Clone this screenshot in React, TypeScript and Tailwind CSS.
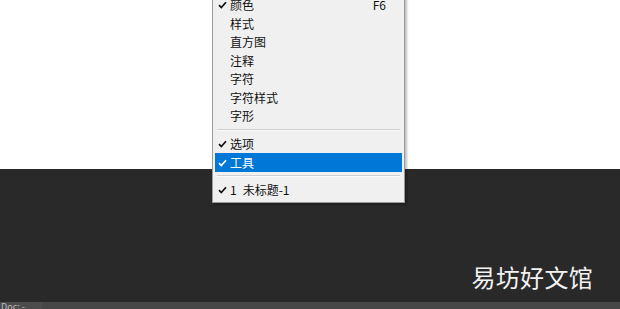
const items = ["颜色", "样式", "直方图", "注释", "字符", "字符样式", "字形"];

function Check({ white }: { white?: boolean }) {
  return (
    <svg width="9" height="8" viewBox="0 0 9 8" className="absolute left-[3px] top-1/2 -translate-y-1/2">
      <path d="M1 4.2 L3.3 6.6 L8 1.2" fill="none" stroke={white ? "#ffffff" : "#111111"} strokeWidth="1.7" />
    </svg>
  );
}

function Item({ label, checked, active, shortcut }: { label: React.ReactNode; checked?: boolean; active?: boolean; shortcut?: string }) {
  return (
    <div
      className={`relative flex h-[18.5px] items-center pl-[15px] pr-[16px] ${active ? "bg-[#0078d7] text-white" : "text-[#111111]"}`}
    >
      {checked && <Check white={active} />}
      <span className="flex-1 leading-none">{label}</span>
      {shortcut && <span className="leading-none">{shortcut}</span>}
    </div>
  );
}

function Separator() {
  return (
    <div className="flex h-[9.25px] items-center px-[2px]">
      <div className="h-[2px] w-full border-t border-[#d0d0d0] border-b border-b-[#fbfbfb]" />
    </div>
  );
}

export default function App() {
  return (
    <div
      className="relative flex h-[309px] w-[620px] flex-col overflow-hidden"
      style={{ fontFamily: '"Noto Sans CJK SC", "Noto Sans", sans-serif' }}
    >
      <div className="h-[169px] bg-white" />
      <div className="flex flex-1 items-end justify-end bg-[#292929] pb-[13px] pr-[27px]">
        <span className="text-[24px] leading-none tracking-[0.3px] text-[#f2f2f2]">易坊好文馆</span>
      </div>
      <div className="flex h-[7px] bg-[#474747]">
        <div className="w-[42px] bg-[#4c4c4c] pl-[1px] text-[9px] leading-[9px] text-[#bdbdbd]">Doc: -</div>
      </div>

      <div className="absolute left-[212px] top-[-7px] w-[193px] border border-[#9a9a9a] bg-[#f0f0f0] p-[2px] text-[12px] shadow-[2px_2px_2px_rgba(0,0,0,0.25)]">
        {items.map((label, i) => (
          <Item key={label} label={label} checked={i === 0} shortcut={i === 0 ? "F6" : undefined} />
        ))}
        <Separator />
        <Item label="选项" checked />
        <Item label="工具" checked active />
        <Separator />
        <Item
          label={
            <>
              <span className="mr-[6px]">1</span>未标题-1
            </>
          }
          checked
        />
      </div>
    </div>
  );
}
